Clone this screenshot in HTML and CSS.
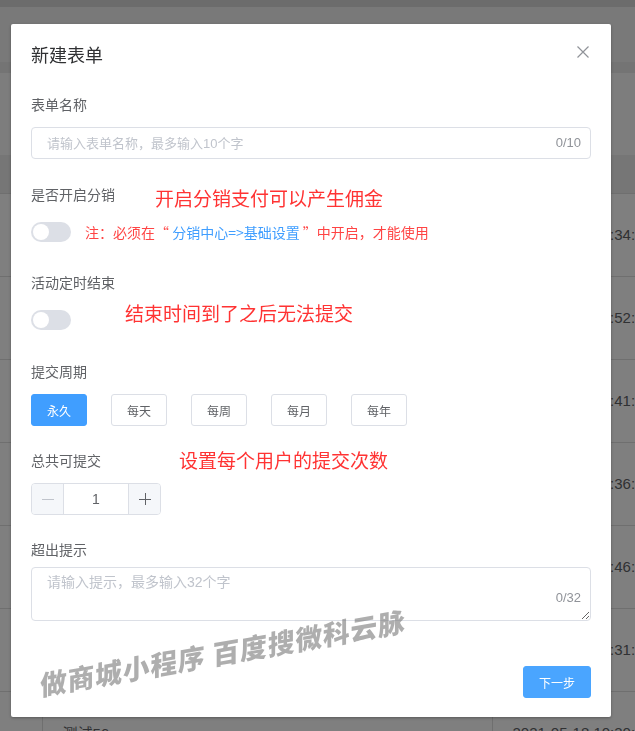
FILE: index.html
```html
<!DOCTYPE html>
<html lang="zh-CN">

<head>
    <meta charset="UTF-8">
    <meta name="viewport" content="width=device-width, initial-scale=1.0">
    <title>新建表单</title>
    <link rel="stylesheet" href="styles.css">
</head>

<body>
    <div class="page">
        <div class="top_bar"></div>
        <div class="tool_bar"></div>
        <div class="tab_bar"></div>
        <div class="filter_bar"></div>
        <table class="list">
            <thead>
                <tr>
                    <th class="col_check"></th>
                    <th class="col_name">表单名称</th>
                    <th class="col_time">创建时间</th>
                </tr>
            </thead>
            <tbody>
                <tr>
                    <td class="col_check"></td>
                    <td class="col_name">测试61</td>
                    <td class="col_time">2021-05-18 10:34:12</td>
                </tr>
                <tr>
                    <td class="col_check"></td>
                    <td class="col_name">测试60</td>
                    <td class="col_time">2021-05-18 10:52:40</td>
                </tr>
                <tr>
                    <td class="col_check"></td>
                    <td class="col_name">测试59</td>
                    <td class="col_time">2021-05-18 10:41:05</td>
                </tr>
                <tr>
                    <td class="col_check"></td>
                    <td class="col_name">测试58</td>
                    <td class="col_time">2021-05-18 10:36:27</td>
                </tr>
                <tr>
                    <td class="col_check"></td>
                    <td class="col_name">测试57</td>
                    <td class="col_time">2021-05-18 10:46:18</td>
                </tr>
                <tr>
                    <td class="col_check"></td>
                    <td class="col_name">测试57</td>
                    <td class="col_time">2021-05-18 10:31:52</td>
                </tr>
                <tr>
                    <td class="col_check"></td>
                    <td class="col_name">测试56</td>
                    <td class="col_time">2021-05-18 10:30:09</td>
                </tr>
            </tbody>
        </table><!-- .list end -->
    </div><!-- .page end -->

    <div class="v_modal"></div>

    <div class="dialog_wrap">
        <div class="dialog">
            <div class="dialog_header">
                <span class="dialog_title">新建表单</span>
                <button class="dialog_close" type="button">
                    <svg width="16" height="16" viewBox="0 0 16 16">
                        <path d="M2.5 2.5 L13.5 13.5 M13.5 2.5 L2.5 13.5" stroke="#909399" stroke-width="1.2" fill="none" />
                    </svg>
                </button>
            </div>

            <div class="dialog_body">
                <div class="form_item item_name">
                    <div class="form_label">表单名称</div>
                    <div class="input_box">
                        <input class="input" type="text" placeholder="请输入表单名称，最多输入10个字">
                        <span class="count">0/10</span>
                    </div>
                </div>

                <div class="form_item item_switch">
                    <div class="form_label">
                        是否开启分销
                        <span class="mark mark_down">开启分销支付可以产生佣金</span>
                    </div>
                    <div class="switch_row">
                        <span class="switch"></span>
                        <span class="tip">注：必须在“ <em>分销中心=&gt;基础设置</em> ”中开启，才能使用</span>
                    </div>
                </div>

                <div class="form_item item_switch item_end">
                    <div class="form_label">活动定时结束</div>
                    <div class="switch_row">
                        <span class="switch"></span>
                        <span class="mark mark_up">结束时间到了之后无法提交</span>
                    </div>
                </div>

                <div class="form_item">
                    <div class="form_label">提交周期</div>
                    <div class="period">
                        <span class="period_btn on">永久</span>
                        <span class="period_btn">每天</span>
                        <span class="period_btn">每周</span>
                        <span class="period_btn">每月</span>
                        <span class="period_btn">每年</span>
                    </div>
                </div>

                <div class="form_item">
                    <div class="form_label">
                        总共可提交
                        <span class="mark mark_total">设置每个用户的提交次数</span>
                    </div>
                    <div class="num_input">
                        <span class="num_btn disabled">
                            <svg width="12" height="12" viewBox="0 0 12 12">
                                <path d="M0 6.5 H12" stroke="#c0c4cc" stroke-width="1" />
                            </svg>
                        </span>
                        <span class="num_value">1</span>
                        <span class="num_btn">
                            <svg width="12" height="12" viewBox="0 0 12 12">
                                <path d="M0 6.5 H12 M6.5 0 V12" stroke="#606266" stroke-width="1" />
                            </svg>
                        </span>
                    </div>
                </div>

                <div class="form_item item_tip">
                    <div class="form_label">超出提示</div>
                    <div class="input_box">
                        <textarea class="textarea" placeholder="请输入提示，最多输入32个字"></textarea>
                        <span class="count count_area">0/32</span>
                    </div>
                </div>
            </div><!-- .dialog_body end -->

            <div class="dialog_footer">
                <button class="btn_primary" type="button">下一步</button>
            </div>

            <span class="watermark">做商城小程序 百度搜微科云脉</span>
        </div><!-- .dialog end -->
    </div><!-- .dialog_wrap end -->
</body>

</html>
```

FILE: styles.css
```css
* {
    margin: 0;
    padding: 0;
    box-sizing: border-box;
}

body {
    font-family: "Liberation Sans", "Noto Sans CJK SC", sans-serif;
    background-color: #fff;
    overflow: hidden;
}

/* 뒤쪽 목록 페이지 */
.page {
    width: 100%;
}

.top_bar {
    height: 7px;
    background-color: #d8d8d8;
}

.tool_bar {
    height: 55px;
    background-color: #f3f3f3;
}

.tab_bar {
    height: 11px;
    background-color: #e8e8e8;
}

.filter_bar {
    height: 82px;
    background-color: #fbfbfb;
}

.list {
    width: 100%;
    table-layout: fixed;
    border-collapse: collapse;
    font-size: 15px;
    color: #606266;
}

.list th {
    height: 38px;
    background-color: #ececec;
    font-weight: normal;
    text-align: left;
    padding: 0 20px;
    border-bottom: 1px solid #dedede;
}

.list td {
    height: 83px;
    padding: 0 20px;
    border-bottom: 1px solid #dedede;
    white-space: nowrap;
    overflow: hidden;
}

.list .col_check {
    width: 42px;
    padding: 0;
    border-right: 1px solid #dedede;
}

.list .col_name {
    width: 450px;
    border-right: 1px solid #dedede;
}

.list .col_time {
    width: 143px;
}

.v_modal {
    position: fixed;
    left: 0;
    top: 0;
    width: 100%;
    height: 100%;
    background-color: rgba(0, 0, 0, .5);
}

.dialog_wrap {
    position: fixed;
    left: 0;
    top: 0;
    width: 100%;
    height: 100%;
}

.dialog {
    position: relative;
    width: 600px;
    margin: 24px 0 0 11px;
    background-color: #fff;
    border-radius: 2px;
    box-shadow: 0 1px 3px rgba(0, 0, 0, .3);
}

.dialog_header {
    display: flex;
    justify-content: space-between;
    padding: 20px 20px 10px;
}

.dialog_title {
    font-size: 18px;
    line-height: 24px;
    color: #303133;
}

.dialog_close {
    width: 16px;
    height: 16px;
    border: none;
    background: none;
    display: flex;
}

.dialog_body {
    padding: 16px 20px 45px;
}

.form_item {
    margin-bottom: 24px;
}

.form_item:last-child {
    margin-bottom: 0;
}

.item_name {
    margin-bottom: 25px;
}

.item_end {
    margin-bottom: 25px;
}

.form_label {
    display: flex;
    align-items: center;
    font-size: 14px;
    line-height: 22px;
    height: 22px;
    color: #606266;
    margin-bottom: 11px;
}

.item_switch .form_label {
    margin-bottom: 10px;
}

.item_tip .form_label {
    margin-bottom: 6px;
}

/* 빨간 설명 글씨 */
.mark {
    font-size: 19px;
    line-height: 22px;
    color: #f33;
    white-space: nowrap;
}

.mark_down {
    margin-left: 40px;
    transform: translateY(5px);
}

.mark_up {
    margin-left: 54px;
    transform: translateY(-5px);
}

.mark_total {
    margin-left: 78px;
    transform: translateY(1px);
}

.input_box {
    position: relative;
}

.input {
    display: block;
    width: 100%;
    height: 32px;
    padding: 0 50px 0 15px;
    border: 1px solid #dcdfe6;
    border-radius: 4px;
    font-family: inherit;
    font-size: 13px;
    color: #606266;
    outline: none;
}

.input::placeholder,
.textarea::placeholder {
    color: #c0c4cc;
}

.count {
    position: absolute;
    right: 10px;
    top: 0;
    line-height: 32px;
    font-size: 13px;
    color: #909399;
}

.textarea {
    display: block;
    width: 100%;
    height: 54px;
    padding: 4px 15px;
    border: 1px solid #dcdfe6;
    border-radius: 4px;
    font-family: inherit;
    font-size: 14px;
    line-height: 21px;
    color: #606266;
    resize: vertical;
    outline: none;
}

.count_area {
    top: auto;
    bottom: 16px;
    line-height: 14px;
}

.switch_row {
    display: flex;
    align-items: center;
    height: 32px;
}

.switch {
    position: relative;
    width: 40px;
    height: 20px;
    border-radius: 10px;
    background-color: #dcdfe6;
    flex-shrink: 0;
}

.switch::after {
    content: "";
    position: absolute;
    left: 2px;
    top: 2px;
    width: 16px;
    height: 16px;
    border-radius: 50%;
    background-color: #fff;
}

.tip {
    margin-left: 14px;
    font-family: "Noto Sans CJK SC", sans-serif;
    font-size: 14px;
    color: #f44;
    white-space: nowrap;
}

.tip em {
    font-style: normal;
    color: #409eff;
}

.period {
    display: flex;
    gap: 24px;
}

.period_btn {
    display: flex;
    align-items: center;
    justify-content: center;
    width: 56px;
    height: 32px;
    border: 1px solid #dcdfe6;
    border-radius: 3px;
    font-size: 12px;
    color: #606266;
}

.period_btn.on {
    background-color: #409eff;
    border-color: #409eff;
    color: #fff;
}

.num_input {
    display: flex;
    width: 130px;
    height: 32px;
    border: 1px solid #dcdfe6;
    border-radius: 4px;
    overflow: hidden;
}

.num_btn {
    display: flex;
    align-items: center;
    justify-content: center;
    width: 32px;
    background-color: #f5f7fa;
    border-left: 1px solid #dcdfe6;
}

.num_btn.disabled {
    border-left: none;
    border-right: 1px solid #dcdfe6;
}

.num_value {
    flex: 1;
    text-align: center;
    line-height: 30px;
    font-size: 14px;
    color: #606266;
}

.dialog_footer {
    display: flex;
    justify-content: flex-end;
    padding: 0 20px 19px;
}

.btn_primary {
    height: 32px;
    padding: 0 15px;
    border: 1px solid #4aa5ff;
    border-radius: 3px;
    background-color: #4aa5ff;
    font-family: inherit;
    font-size: 12px;
    color: #fff;
}

/* 스크린샷 위에 찍힌 워터마크 */
.watermark {
    position: absolute;
    left: 212px;
    top: 628px;
    transform: translate(-50%, -50%) rotate(-10deg) skewX(-10deg);
    font-family: "Noto Sans CJK SC", sans-serif;
    font-size: 27px;
    font-weight: 900;
    letter-spacing: 1px;
    color: rgba(120, 120, 120, .6);
    white-space: nowrap;
    pointer-events: none;
}
```
